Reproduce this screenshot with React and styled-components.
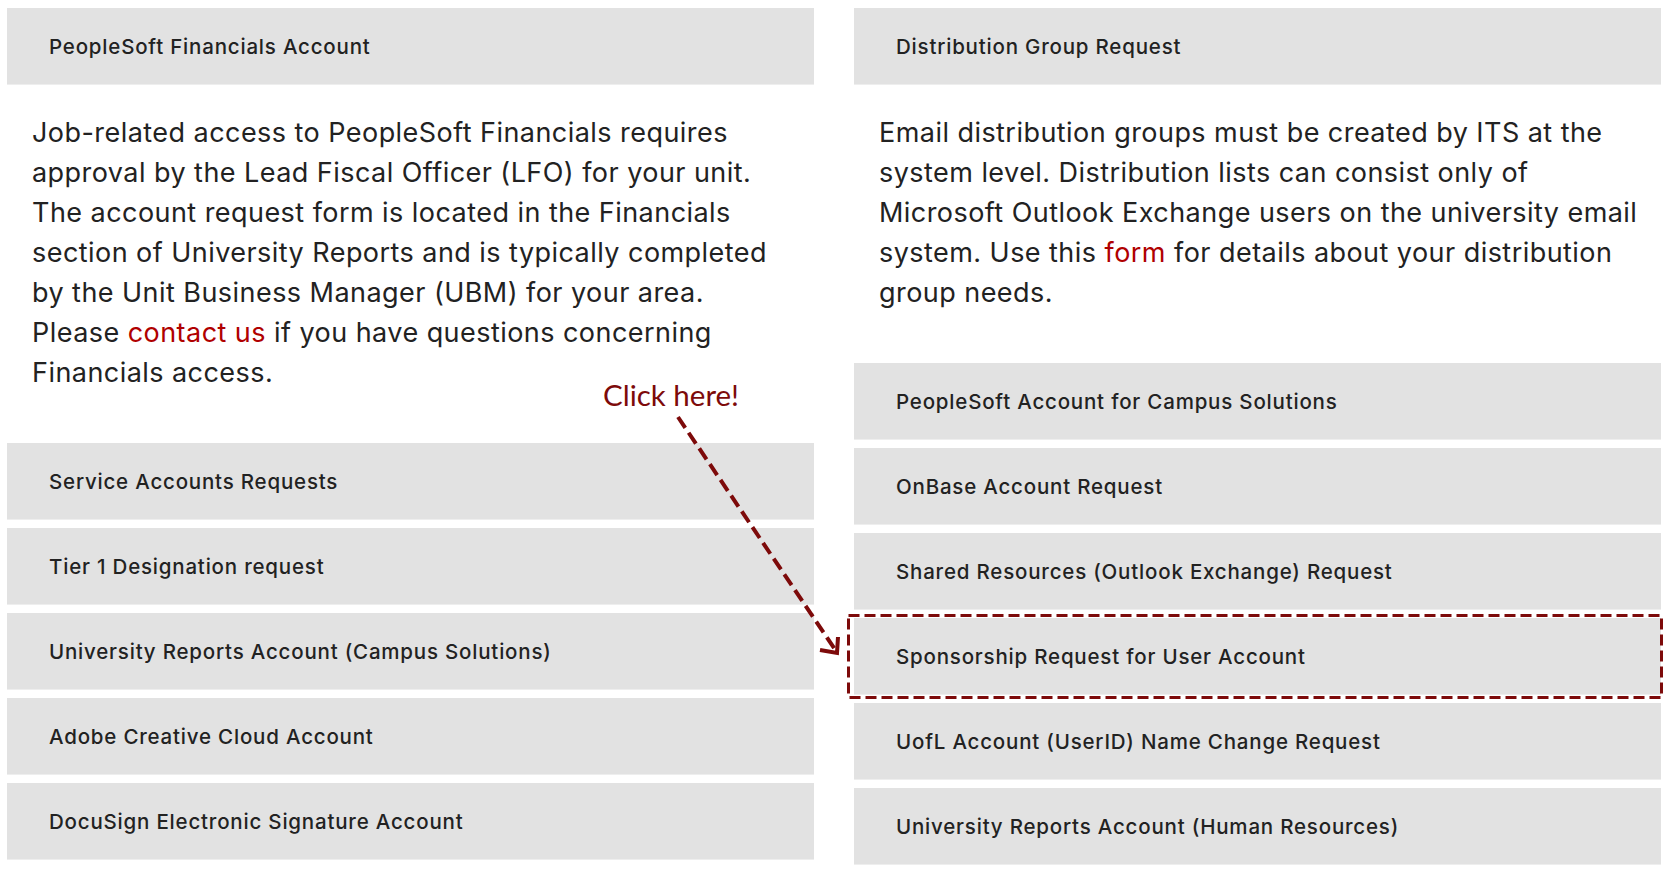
import React from 'react';
import styled, { createGlobalStyle } from 'styled-components';

const GlobalStyle = createGlobalStyle`
  html, body {
    margin: 0;
    padding: 0;
    background: #ffffff;
  }
  body {
    font-family: Inter, "Liberation Sans", sans-serif;
    color: #242424;
  }
`;

const Page = styled.div`
  position: relative;
  display: grid;
  grid-template-columns: 807px 807px;
  column-gap: 40px;
  padding: 8px 7px;
  width: 1668px;
  height: 872px;
  box-sizing: border-box;
  overflow: hidden;
`;

const Column = styled.div`
  display: flex;
  flex-direction: column;
`;

const List = styled.div`
  display: flex;
  flex-direction: column;
  gap: 8px;
`;

const Item = styled.a`
  position: relative;
  display: flex;
  align-items: center;
  height: 76px;
  padding-left: 42px;
  background: #e2e2e2;
  border-bottom: 1px solid #eeeeee;
  color: #222222;
  font-size: 20.5px;
  font-weight: 500;
  letter-spacing: 0.8px;
  text-decoration: none;
  cursor: pointer;
`;

const Body = styled.p`
  margin: 28px 0 50px;
  padding: 0 25px;
  font-size: 27px;
  letter-spacing: 0.45px;
  line-height: 40px;
  white-space: nowrap;
  color: #222222;
`;

const TextLink = styled.a`
  color: #b00000;
  text-decoration: none;
`;

const Highlight = styled.svg`
  position: absolute;
  left: -7px;
  top: -4px;
  pointer-events: none;
`;

const Callout = styled.div`
  position: absolute;
  left: 603px;
  top: 377px;
  font-family: Lato, "Open Sans", sans-serif;
  font-size: 29.5px;
  color: #7d0a0a;
`;

const Arrow = styled.svg`
  position: absolute;
  left: 660px;
  top: 410px;
  overflow: visible;
  pointer-events: none;
`;

const leftItems = [
  'Service Accounts Requests',
  'Tier 1 Designation request',
  'University Reports Account (Campus Solutions)',
  'Adobe Creative Cloud Account',
  'DocuSign Electronic Signature Account',
];

const rightItems = [
  'PeopleSoft Account for Campus Solutions',
  'OnBase Account Request',
  'Shared Resources (Outlook Exchange) Request',
  'Sponsorship Request for User Account',
  'UofL Account (UserID) Name Change Request',
  'University Reports Account (Human Resources)',
];

const DashedFrame = () => (
  <Highlight width="816" height="85">
    <rect
      x="1.5"
      y="1.5"
      width="813"
      height="82"
      fill="none"
      stroke="#7d0a0a"
      strokeWidth="3"
      strokeDasharray="11 5"
    />
  </Highlight>
);

export default function App() {
  return (
    <>
      <GlobalStyle />
      <Page>
        <Column>
          <Item>PeopleSoft Financials Account</Item>
          <Body>
            Job-related access to PeopleSoft Financials requires
            <br />
            approval by the Lead Fiscal Officer (LFO) for your unit.
            <br />
            The account request form is located in the Financials
            <br />
            section of University Reports and is typically completed
            <br />
            by the Unit Business Manager (UBM) for your area.
            <br />
            Please <TextLink>contact us</TextLink> if you have questions concerning
            <br />
            Financials access.
          </Body>
          <List>
            {leftItems.map((label) => (
              <Item key={label}>{label}</Item>
            ))}
          </List>
        </Column>

        <Column>
          <Item>Distribution Group Request</Item>
          <Body>
            Email distribution groups must be created by ITS at the
            <br />
            system level. Distribution lists can consist only of
            <br />
            Microsoft Outlook Exchange users on the university email
            <br />
            system. Use this <TextLink>form</TextLink> for details about your distribution
            <br />
            group needs.
          </Body>
          <List>
            {rightItems.map((label) => (
              <Item key={label}>
                {label}
                {label.startsWith('Sponsorship') && <DashedFrame />}
              </Item>
            ))}
          </List>
        </Column>

        <Callout>Click here!</Callout>
        <Arrow width="190" height="260">
          <line
            x1="18"
            y1="7"
            x2="176"
            y2="241"
            stroke="#7d0a0a"
            strokeWidth="4"
            strokeDasharray="13 6"
          />
          <polyline
            points="160,240 177,243 178,227"
            fill="none"
            stroke="#7d0a0a"
            strokeWidth="4"
            strokeLinejoin="miter"
          />
        </Arrow>
      </Page>
    </>
  );
}
